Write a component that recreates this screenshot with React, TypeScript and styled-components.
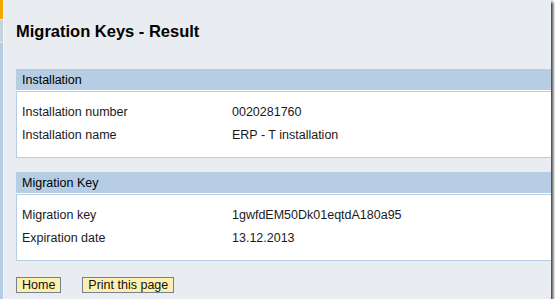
import styled, { createGlobalStyle } from 'styled-components'

const GlobalStyle = createGlobalStyle`
  body {
    margin: 0;
    background: #ffffff;
    font-family: "Liberation Sans", Arial, sans-serif;
  }
`

const sections = [
  {
    title: 'Installation',
    rows: [
      ['Installation number', '0020281760'],
      ['Installation name', 'ERP - T installation'],
    ],
  },
  {
    title: 'Migration Key',
    rows: [
      ['Migration key', '1gwfdEM50Dk01eqtdA180a95'],
      ['Expiration date', '13.12.2013'],
    ],
  },
]

function App() {
  return (
    <>
      <GlobalStyle />
      <Frame>
        <SideStrip>
          <StripPart color="#f2a900" size={19} />
          <StripPart color="#c8d2db" size={22} />
          <StripPart color="#b5cce4" />
        </SideStrip>
        <Main>
          <Title>Migration Keys - Result</Title>
          {sections.map((s) => (
            <Section key={s.title}>
              <SectionHeader>{s.title}</SectionHeader>
              <SectionBody>
                {s.rows.map(([label, value]) => (
                  <Row key={label}>
                    <Label>{label}</Label>
                    <Value>{value}</Value>
                  </Row>
                ))}
              </SectionBody>
            </Section>
          ))}
          <Buttons>
            <Button>Home</Button>
            <Button>Print this page</Button>
          </Buttons>
        </Main>
      </Frame>
    </>
  )
}

const Frame = styled.div`
  width: 551px;
  height: 299px;
  display: flex;
  background: #e9edf1;
  overflow: hidden;
  box-shadow: 2px 2px 3px rgba(0, 0, 0, 0.8);
`

const SideStrip = styled.div`
  width: 3px;
  flex: none;
  display: flex;
  flex-direction: column;
  gap: 1px;
  border-right: 1px solid #f3f5f7;
`

const StripPart = styled.div<{ color: string; size?: number }>`
  background: ${(p) => p.color};
  ${(p) => (p.size ? `height: ${p.size}px; flex: none;` : 'flex: 1;')}
`

const Main = styled.div`
  flex: 1;
  min-width: 0;
  padding: 21px 0 0 12px;
`

const Title = styled.h1`
  margin: 0 0 28px;
  font-size: 16.5px;
  line-height: 20px;
  font-weight: bold;
  color: #000;
`

const Section = styled.div`
  width: 560px;
  margin-bottom: 14px;
`

const SectionHeader = styled.div`
  height: 20px;
  padding: 1px 0 0 6px;
  line-height: 21px;
  background: #b7cde4;
  border-bottom: 1px solid #ffffff;
  font-size: 12.5px;
  color: #000;
`

const SectionBody = styled.div`
  background: #ffffff;
  border: 1px solid #b7cde4;
  padding: 9px 0 10px 5px;
`

const Row = styled.div`
  display: flex;
  height: 23px;
  line-height: 23px;
  font-size: 12.5px;
  color: #1a1a1a;
`

const Label = styled.div`
  width: 210px;
  flex: none;
`

const Value = styled.div`
  white-space: nowrap;
`

const Buttons = styled.div`
  display: flex;
  gap: 21px;
  margin-top: 16px;
`

const Button = styled.button`
  height: 16px;
  padding: 0 5px;
  border: 1px solid #76838f;
  background: #fdefb0;
  font-family: "Liberation Sans", Arial, sans-serif;
  font-size: 12.5px;
  line-height: 14px;
  color: #111;
  cursor: pointer;
`

export default App
